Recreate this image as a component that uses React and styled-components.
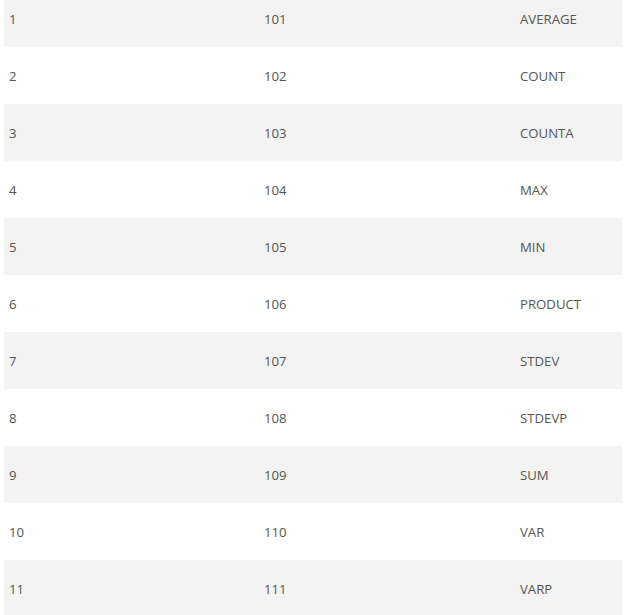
import React from "react";
import styled, { createGlobalStyle } from "styled-components";

const rows = [
  ["1", "101", "AVERAGE"],
  ["2", "102", "COUNT"],
  ["3", "103", "COUNTA"],
  ["4", "104", "MAX"],
  ["5", "105", "MIN"],
  ["6", "106", "PRODUCT"],
  ["7", "107", "STDEV"],
  ["8", "108", "STDEVP"],
  ["9", "109", "SUM"],
  ["10", "110", "VAR"],
  ["11", "111", "VARP"],
];

const Global = createGlobalStyle`
  html, body {
    margin: 0;
    background: #fff;
    overflow: hidden;
  }
`;

const Page = styled.div`
  padding: 0 4px;
  font-family: "Open Sans", "Liberation Sans", sans-serif;
  font-size: 13.2px;
  color: #555;
`;

const Table = styled.div`
  margin-top: -10px;
  display: flex;
  flex-direction: column;
`;

const Row = styled.div`
  display: grid;
  grid-template-columns: 255px 256px 1fr;
  align-items: center;
  height: 57px;
  background: ${({ $striped }) => ($striped ? "#f3f3f3" : "#fff")};
`;

const Cell = styled.div`
  padding-left: 5px;
  padding-top: 1px;
`;

export default function App() {
  return (
    <Page>
      <Global />
      <Table>
        {rows.map((r, i) => (
          <Row key={r[0]} $striped={i % 2 === 0}>
            {r.map((c, j) => (
              <Cell key={j}>{c}</Cell>
            ))}
          </Row>
        ))}
      </Table>
    </Page>
  );
}
